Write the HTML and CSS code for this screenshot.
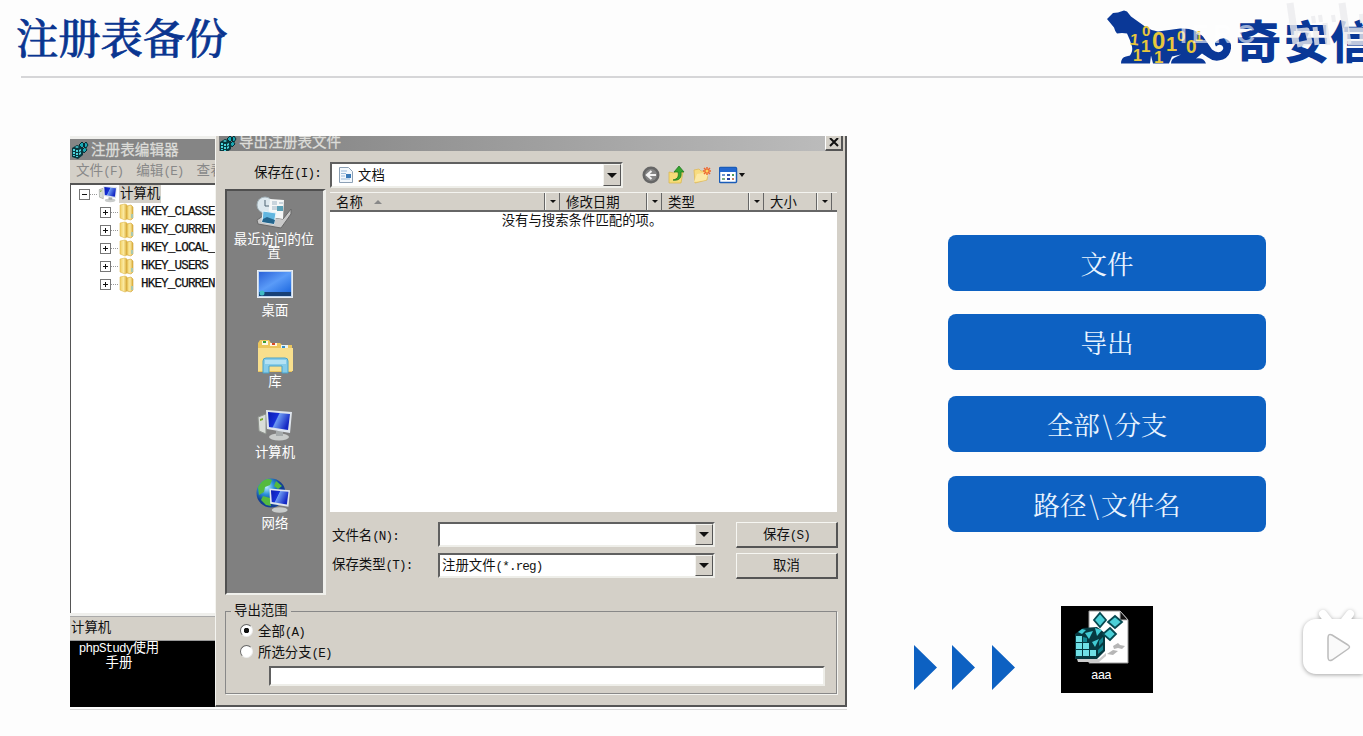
FILE: index.html
```html
<!DOCTYPE html>
<html lang="zh-CN">
<head>
<meta charset="utf-8">
<title>注册表备份</title>
<link rel="stylesheet" href="styles.css">
</head>
<body>
<svg class="defs" width="0" height="0">
  <defs>
    <linearGradient id="folder" x1="0" x2="1"><stop offset="0" stop-color="#f0cf62"/><stop offset=".5" stop-color="#fbe9a0"/><stop offset="1" stop-color="#d9ab35"/></linearGradient>
    <linearGradient id="screen" x1="0" x2="1" y2=".4"><stop offset="0" stop-color="#0a1bb0"/><stop offset=".45" stop-color="#1630d8"/><stop offset=".5" stop-color="#6c9af2"/><stop offset="1" stop-color="#1428c4"/></linearGradient>
    <linearGradient id="desk" x1="0" x2="1" y2="1"><stop offset="0" stop-color="#2b62d8"/><stop offset=".5" stop-color="#5a9bf8"/><stop offset="1" stop-color="#1f6ae0"/></linearGradient>
    <radialGradient id="globe" cx=".35" cy=".3"><stop offset="0" stop-color="#b8ecff"/><stop offset=".5" stop-color="#2b90d8"/><stop offset="1" stop-color="#123f94"/></radialGradient>
    <symbol id="cubes" viewBox="0 0 18 18">
      <path d="M1 7l5-3 6 2v8l-5 4-6-2z" fill="#08383f"/>
      <path d="M2 8h2v2H2zM5 9h2v2H5zM2 11h2v2H2zM5 12h2v2H5zM2 14h2v1H2zM5 15h2v1H5zM8 9l2-1v2l-2 1zM8 12l2-1v2l-2 1zM4 6l2-1 2 1-2 1z" fill="#4bd3dc"/>
      <path d="M8 4l3-3 3 3-3 3zM12 4l3-3 2 3-2 3zM11 9l3-3 2 3-3 3z" fill="#1ba9b5" stroke="#052f36"/>
    </symbol>
    <symbol id="folders" viewBox="0 0 16 18">
      <path d="M1 2l5-1 2 1v14l-2 1-5-2z" fill="url(#folder)" stroke="#dfb94d" stroke-width=".6"/>
      <path d="M8 3l4-1 2 2v11l-2 2-4-1z" fill="url(#folder)" stroke="#d0a339" stroke-width=".6"/>
      <path d="M12 11h2v4h-2z" fill="#a8c8b0"/>
    </symbol>
    <symbol id="pc" viewBox="0 0 36 34">
      <path d="M1 9l8-3v20l-7-3z" fill="#d9ddd8" stroke="#8d928c"/><path d="M3 11l3-1v2l-3 1z" fill="#7ba92f"/>
      <ellipse cx="22" cy="29" rx="10" ry="3.5" fill="#c9cccb"/><path d="M19 23h7v5h-7z" fill="#a5aaab"/>
      <path d="M9 2l26 2-2 21-23-4z" fill="#dfe5ec"/><path d="M11 4l22 2-2 16-19-3z" fill="url(#screen)"/>
    </symbol>
  </defs>
</svg>

<header class="head">
  <h1 class="title">注册表备份</h1>
  <svg class="logo" viewBox="1090 0 273 76">
    <path fill="#0a3897" d="M1107 19l6-6 5-.5 6-2 3 1 4 5q7 5 14 10 6 4 13 5l22-3q15-1 23 8 5 7 9 13 5 4 9 2 4-3 1-6-3-2-6 1-2-3 0-5 5-4 9-3 7 2 6 10-1 8-8 11-9 3-15-2l-6-4-6 5q8-1 10 5h-35q0-5 6-7l4-2-9 2-3 7h-16l-2-8-1 8h-29q0-6 5-7l4-1q3-4 2-9-2-7-5-13-5-1-10 0-2-2-3-6z"/>
    <g fill="#e8c73c" class="digits">
      <text x="1130" y="45" font-size="16" transform="rotate(6 1134 40)">1</text><text x="1133" y="61" font-size="16">1</text>
      <text x="1142" y="36" font-size="15">0</text><text x="1141" y="52" font-size="17">1</text>
      <text x="1152" y="49" font-size="24">0</text><text x="1154" y="63" font-size="17">1</text>
      <text x="1166" y="51" font-size="20">1</text><text x="1177" y="41" font-size="15">0</text>
      <text x="1186" y="53" font-size="19">0</text><text x="1195" y="41" font-size="14">1</text>
    </g>
    <g class="brand"><text x="1236" y="59">奇</text><text x="1284" y="59">安</text><text x="1330" y="59">信</text></g>
    <text class="wm" x="1180" y="43">IERC</text>
    <g fill="none" stroke="#ebebee" stroke-opacity=".8" stroke-linejoin="round">
      <path stroke-width="7" d="M1290 3l6 41M1342 3l6 41"/><path stroke-width="5" d="M1296 31l11-1 3 12-13 3M1315 27l2 18M1325 23l3 22M1348 30h14v13h-14"/><path stroke-width="4" d="M1313 16l1 7M1320 15l1 7M1333 15l1 7M1361 14l1 9"/>
    </g>
  </svg>
</header>
<hr class="rule">

<main class="content">
  <section class="shot">
    <div class="regedit">
      <div class="bar"><svg width="18" height="18"><use href="#cubes"/></svg><span>注册表编辑器</span></div>
      <div class="menu"><span>文件<i>(F)</i></span><span>编辑<i>(E)</i></span><span>查看</span></div>
      <div class="tree">
        <div class="node root"><b class="pm minus"></b><em></em><svg width="20" height="18" viewBox="0 0 36 34"><use href="#pc"/></svg><strong>计算机</strong></div>
        <div class="branch">
          <div class="node"><b class="pm"></b><em></em><svg width="16" height="18"><use href="#folders"/></svg><i>HKEY_CLASSE</i></div>
          <div class="node"><b class="pm"></b><em></em><svg width="16" height="18"><use href="#folders"/></svg><i>HKEY_CURREN</i></div>
          <div class="node"><b class="pm"></b><em></em><svg width="16" height="18"><use href="#folders"/></svg><i>HKEY_LOCAL_</i></div>
          <div class="node"><b class="pm"></b><em></em><svg width="16" height="18"><use href="#folders"/></svg><i>HKEY_USERS</i></div>
          <div class="node"><b class="pm"></b><em></em><svg width="16" height="18"><use href="#folders"/></svg><i>HKEY_CURREN</i></div>
        </div>
      </div>
      <div class="status">计算机</div>
      <div class="desktop"><i>phpStudy</i>使用<br>手册</div>
    </div>

    <div class="dialog">
      <div class="dbar"><svg width="18" height="18"><use href="#cubes"/></svg><span>导出注册表文件</span><button class="close"><svg width="10" height="9"><path d="M1 0l8 8M9 0L1 8" stroke="#111" stroke-width="2"/></svg></button></div>
      <div class="look">
        <label>保存在<i>(I):</i></label>
        <div class="combo"><svg width="16" height="18"><path d="M1.500 1.500h9l4 4v11h-13z" fill="#f3f8fd" stroke="#8ca0b5"/><path d="M3 5h6M3 7.500h5M3 10h4M3 13h9" stroke="#9bbbd9"/><path d="M8 8h5v4H8z" fill="#3a7ab8"/></svg><span>文档</span><b class="drop"></b></div>
        <div class="tools">
          <svg width="18" height="18"><circle cx="9" cy="9" r="8.500" fill="#666"/><circle cx="9" cy="9" r="6" fill="#858585"/><path d="M14 9H6M9.500 5L5 9l4.500 4" fill="none" stroke="#f3f3f3" stroke-width="2.200"/></svg>
          <svg width="17" height="18"><path d="M1 6l5 1 2-2 7 1-2 11H1z" fill="#f6dc78" stroke="#d8b44a" stroke-width=".7"/><path d="M5 14c5-1 6-4 5-8H6l5-6 5 6h-3c1 6-2 9-8 8z" fill="#36a52f" stroke="#187319" stroke-width=".7"/></svg>
          <svg width="18" height="18"><path d="M1 4l5-1 2 2h7l-1 9-12 3z" fill="#f8dc80" stroke="#deb95a" stroke-width=".8"/><path d="M1 16L4 8l12-2-3 8z" fill="#fce9a5"/><path d="M14 1v8M10 5h8M11 2l6 6M17 2l-6 6" stroke="#ed6630" stroke-width="1.500"/><circle cx="14" cy="5" r="1.500" fill="#ffd35c"/></svg>
          <svg width="26" height="18"><rect x=".5" y="1.500" width="17" height="15" rx="1" fill="#fff" stroke="#1a5cb8" stroke-width="1.500"/><path d="M1 2h16v4H1z" fill="#2468cf"/><path d="M3 8h3v2H3z" fill="#6b94cf"/><path d="M8 8h3v2H8z" fill="#325caf"/><path d="M13 8h2v2h-2z" fill="#4d9858"/><path d="M3 12h3v2H3z" fill="#77aa82"/><path d="M8 12h3v2H8z" fill="#2a3f9f"/><path d="M13 12h2v2h-2z" fill="#c77e62"/><path d="M20 7h6l-3 4z" fill="#111"/></svg>
        </div>
      </div>
      <div class="mid">
        <nav class="places">
          <div class="place first"><svg width="38" height="34" viewBox="0 0 38 34"><path d="M2 24l6-4 20 3 8-10v5L26 32 3 28z" fill="#c9c9c9" stroke="#686868"/><circle cx="10" cy="9" r="8" fill="#dce8ee" stroke="#a2b1b8"/><path d="M10 4v6h4" fill="none" stroke="#4e6472"/><path d="M15 3l14 1-1 19-15-2z" fill="#f5f7f7"/><path d="M17 6h5M17 8h5M24 7h4M17 11h5M17 13h8" stroke="#9bb1c2"/><path d="M22 10h6v5h-6z" fill="#5aa0b6"/><path d="M8 15l13 2-2 11-12-2z" fill="#62b6df" stroke="#e9f5fa"/><path d="M8 23l4-2 8 3-1 4-12-2z" fill="#24658d"/></svg><span>最近访问的位<br>置</span></div>
          <div class="place desk"><svg width="36" height="28"><rect x=".5" y=".5" width="35" height="27" fill="#bdd4ef" stroke="#e9edf2"/><path d="M2 2h32v20H2z" fill="url(#desk)"/><path d="M2 22h32v4H2z" fill="#174076"/><circle cx="5" cy="23" r="2.500" fill="#40bbc6"/></svg><span>桌面</span></div>
          <div class="place lib"><svg width="37" height="36"><path d="M1 4l2-3h9l2 3h9l2 2h10v27H1z" fill="#ecc65c"/><path d="M5 2h6v4H5z" fill="#f8f8e8"/><path d="M6 2h3v2H6z" fill="#3a9d35"/><path d="M13 4h7v3h-7z" fill="#fff4e0"/><path d="M15 4h3v2h-3z" fill="#d94926"/><path d="M24 6h7v4h-7z" fill="#e7f3f6"/><path d="M25 7h3v2h-3z" fill="#338fc9"/><path d="M1 9h35v23H1z" fill="#f8df8d"/><path d="M6 34V22q0-3 3-3h19q3 0 3 3v12h-6v-7H12v7z" fill="#86cce9" stroke="#4ba2c8"/><path d="M8 21h21v4H8z" fill="#b4e2f4"/></svg><span>库</span></div>
          <div class="place comp"><svg width="38" height="34" viewBox="0 0 36 34"><use href="#pc"/></svg><span>计算机</span></div>
          <div class="place net"><svg width="38" height="36"><circle cx="15" cy="15" r="14.500" fill="url(#globe)"/><path d="M2 9c5-8 10-9 14-7l-2 5-5 2-1 5-5 3zM7 18l7 2 1 8-5-1-5-5zM20 3l6 5-4 3-4-3z" fill="#55ba3e"/><svg x="11" y="9" width="27" height="27" viewBox="8 0 30 34"><ellipse cx="22" cy="29" rx="10" ry="3.500" fill="#c9cccb"/><path d="M9 2l26 2-2 21-23-4z" fill="#dfe5ec"/><path d="M11 4l22 2-2 16-19-3z" fill="url(#screen)"/></svg></svg><span>网络</span></div>
        </nav>
        <div class="right">
          <div class="list">
            <div class="cols"><span class="c1">名称<u></u></span><b></b><span class="c2">修改日期</span><b></b><span class="c3">类型</span><b></b><span class="c4">大小</span><b></b><span class="c5"></span></div>
            <p>没有与搜索条件匹配的项。</p>
          </div>
          <div class="form">
            <label>文件名<i>(N):</i></label><div class="combo"><b class="drop"></b></div><button class="btn">保存<i>(S)</i></button>
            <label class="kind">保存类型<i>(T):</i></label><div class="combo"><span>注册文件<i>(*.reg)</i></span><b class="drop"></b></div><button class="btn">取消</button>
          </div>
        </div>
      </div>
      <fieldset class="range">
        <legend>导出范围</legend>
        <div class="radio"><b class="on"></b><span>全部<i>(A)</i></span></div>
        <div class="radio"><b></b><span>所选分支<i>(E)</i></span></div>
        <div class="field"></div>
      </fieldset>
    </div>
  </section>

  <aside class="side">
    <div class="step">文件</div>
    <div class="step">导出</div>
    <div class="step s3">全部<span>\</span>分支</div>
    <div class="step s4">路径<span>\</span>文件名</div>
    <div class="result">
      <svg class="arrows" width="102" height="46"><path d="M0 0l23 22.500L0 45zM38 0l23 22.500L38 45zM78 0l23 22.500L78 45z" fill="#0d61c2"/></svg>
      <div class="regfile">
        <svg width="56" height="56">
          <path d="M16 1h31l8 9v43H16z" fill="#fff" stroke="#999"/><path d="M47 1v9h8z" fill="#111" stroke="#bbb"/>
          <path d="M34 44l6-4 5 1-5 4zM40 36l5-3 2 2 5 1-3 3-4-1-4 1z" fill="#b6b6b6"/><path d="M4 49h22l7-6v3l-7 6H5z" fill="#ccc"/>
          <path d="M2 24l8-6 14-1 8 6v18l-8 8H2z" fill="#063940"/>
          <g fill="#6fe0e6"><path d="M3 26h6v6H3zM3 33h6v6H3zM3 40h6v6H3zM10 33h6v6h-6zM10 40h6v6h-6zM17 40h6v6h-6z"/><path d="M5 22l4-3 4 1-4 4zM12 23l8-2-4 8zM22 18l7 2-5 6zM19 32l7-3-4 8z" fill="#42cbd4"/><path d="M26 31l4-4v5l-4 4zM25 40l5-5v5l-5 4zM10 27l4 1v4h-4z" fill="#138792"/></g>
          <g fill="#4bd0d8" stroke="#074951" stroke-width="1.800"><path d="M27 3l6 7-6 7-6-7zM42 6l7 6-7 6-7-6zM37 18l6 6-6 6-7-6z"/></g>
        </svg><i>aaa</i>
      </div>
    </div>
  </aside>
</main>
<svg class="tv" width="66" height="76" viewBox="0 0 66 76"><g fill="#fff"><path d="M26 10l7 9M53 10l-7 9" stroke="#fff" stroke-width="8" stroke-linecap="round"/><rect x="6" y="15" width="70" height="55" rx="13"/></g><path d="M31 34q0-5 4-3l16 10q3 2 0 4L35 56q-4 2-4-3z" fill="#fafafa" stroke="#bcbcbc" stroke-width="1.500"/></svg>
</body>
</html>
```
FILE: styles.css
```css
* { box-sizing: border-box; }
body { margin: 0; width: 1363px; height: 736px; overflow: hidden; position: relative; background: #fdfdfd; color: #111; font: 13.4px/18px "Liberation Sans", "Noto Sans CJK SC", sans-serif; }
svg { display: block; flex: none; }
.defs { position: absolute; }
i { font: normal 12.6px/1 "Liberation Mono", monospace; letter-spacing: -.86px; }
button { font: inherit; padding: 0; color: inherit; }

.head { display: flex; justify-content: space-between; height: 76px; padding-left: 16px; }
.title { margin: 0; padding-top: 6px; font: 500 42.300px/60px "Noto Serif CJK SC", "Noto Sans CJK SC", serif; color: #0a3590; -webkit-text-stroke: .7px #0a3590; }
.logo { width: 273px; height: 76px; }
.digits { font-family: "Liberation Sans", sans-serif; font-weight: bold; }
.brand { font: 900 45px "Noto Sans CJK SC", sans-serif; fill: #0a3897; }
.wm { font: bold 25px "Liberation Sans", sans-serif; fill: #fff; fill-opacity: .6; letter-spacing: 5px; }
.rule { margin: 0 0 0 21px; border: 0; height: 2px; background: #d6d6d8; }

.content { display: flex; padding: 58px 0 0 70px; }
.shot { display: flex; width: 777px; height: 574px; border-bottom: 1px solid #d8d8d8; padding-bottom: 2px; }
.regedit { width: 145px; padding-top: 3px; overflow: hidden; display: flex; flex-direction: column; background: #efefec; }
.regedit > div { white-space: nowrap; flex: none; overflow: hidden; }
.bar { height: 21px; background: #858585; color: #dcdcd8; display: flex; align-items: center; gap: 2px; font-size: 14.600px; padding: 1px; -webkit-text-stroke: .3px; }
.menu { height: 23px; background: #d4d0c8; color: #888; display: flex; gap: 13px; padding: 2px 0 0 6px; font-size: 13.600px; }
.tree { height: 430px; background: #fff; border: solid #555; border-width: 2px 0 0 1px; padding: 0 0 0 8px; }
.node { display: flex; align-items: center; height: 18px; }
.node strong { font-weight: 400; background: #d4d0c8; padding: 0 1px; margin-left: 1px; }
.node em { flex: none; width: 7px; border-top: 1px dotted #999; }
.node i { margin-left: 6px; -webkit-text-stroke: .25px #111; }
.node svg { margin-left: 1px; }
.branch { padding-left: 21px; }
.pm { flex: none; width: 11px; height: 11px; border: 1px solid #777; background: linear-gradient(#111, #111) center / 5px 1px no-repeat, linear-gradient(#111, #111) center / 1px 5px no-repeat, #fff; }
.pm.minus { background: linear-gradient(#111, #111) center / 5px 1px no-repeat, #fff; }
.status { height: 24px; margin-top: 3px; background: #d4d0c8; padding: 2px 0 0 1px; border-top: 1px solid #aaa; }
.regedit .desktop { flex: 1; background: #000; color: #fff; text-align: center; line-height: 13px; padding: 0 47px 0 0; border-top: 1px solid #999; }

.dialog { width: 632px; background: #d4d0c8; border: solid #555; border-width: 0 2px 2px 0; border-left: 1px solid #f4f4f0; padding: 0 2px 0 3px; display: flex; flex-direction: column; }
.dbar { height: 15px; display: flex; align-items: center; gap: 2px; color: #dcdcd8; overflow: hidden; background: linear-gradient(90deg, #808080, #bdbdbd); font-size: 14.600px; line-height: 15px; -webkit-text-stroke: .3px; }
.dbar span { margin-top: -3px; flex: 1; }
.close { width: 18px; height: 15px; border: solid #555; border-width: 0 2px 2px 0; border-left: 1px solid #fff; background: #d4d0c8; display: flex; justify-content: center; align-items: center; }
.look { display: flex; height: 38px; padding: 11px 0 0 35px; }
.look label { width: 76px; padding-top: 2px; }
.combo { display: flex; align-items: center; background: #fff; border: 2px solid; border-color: #606060 #eeeee9 #eeeee9 #606060; padding-left: 2px; }
.look .combo { width: 293px; height: 26px; padding-left: 6px; gap: 4px; }
.look .combo span { padding-top: 1px; }
.drop { width: 18px; height: 100%; margin-left: auto; border: 1px solid; border-color: #f4f4f0 #555 #555 #f4f4f0; background: #d4d0c8; display: flex; justify-content: center; align-items: center; }
.drop::before, .cols b::before { content: ""; border: solid transparent; border-width: 5px 5px 0; border-top-color: #111; }
.tools { display: flex; gap: 8px; padding: 4px 0 0 19px; }
.mid { display: flex; gap: 4px; padding-left: 6px; height: 408px; }
.places { width: 101px; height: 406px; flex: none; background: #808080; border: 2px solid; border-color: #505050 #f0f0ec #f0f0ec #505050; border-right-width: 3px; color: #fff; display: flex; flex-direction: column; padding-top: 3px; }
.place { height: 71px; display: flex; flex-direction: column; align-items: center; text-align: center; flex: none; }
.place span { line-height: 13px; margin-top: 4px; }
.place.first { height: 72px; padding: 2px 2px 0 0; }
.place.first span { margin-top: 3px; white-space: nowrap; }
.place.desk { height: 70px; padding-top: 4px; }
.place.desk span { margin-top: 6px; }
.place.lib { padding-top: 3px; }
.place.lib span { margin-top: 0; }
.place.comp { padding-top: 1px; }
.place.net span { margin-top: 3px; }
.right { width: 510px; padding-top: 3px; }
.list { width: 507px; height: 320px; background: #fff; }
.list p { margin: 0; padding-right: 3px; text-align: center; line-height: 18px; }
.cols { height: 20px; display: flex; background: #d4d0c8; border-top: 1px solid #f4f4f0; border-bottom: 2px solid #666; overflow: hidden; }
.cols span { padding: 1px 0 0 6px; border-right: 1px solid #666; white-space: nowrap; }
.cols b { width: 15px; border-left: 1px solid #f4f4f0; border-right: 1px solid #666; display: flex; align-items: center; justify-content: center; flex: none; }
.cols b::before { border-width: 3px 3px 0; }
.cols u { display: inline-block; margin: 0 0 3px 11px; border: solid transparent; border-width: 0 4px 4px; border-bottom-color: #888; }
.c1 { width: 215px; } .c2 { width: 87px; } .c3 { width: 87px; } .c4 { width: 53px; } .cols .c5 { flex: 1; border: 0; padding: 0; }
.form { display: grid; grid-template-columns: 108px 277px 102px; column-gap: 0; row-gap: 5px; padding-top: 10px; width: 510px; }
.form .combo { height: 25px; }
.form label { padding: 5px 0 0 2px; white-space: nowrap; }
.form .kind { padding-top: 3px; }
.form .btn { margin-left: 21px; width: 102px; height: 26px; border: 1px solid; border-color: #f6f6f2 #555 #555 #f6f6f2; border-right-width: 2px; border-bottom-width: 2px; background: #d4d0c8; }
.range { margin: 6px 7px 0 6px; width: 612px; height: 91px; border: 1px solid #888; box-shadow: 1px 1px 0 #f4f4f0; padding: 0 0 0 14px; }
.range legend { padding: 0 3px; margin-left: -9px; line-height: 16px; }
.radio { display: flex; align-items: center; height: 21px; padding-top: 1px; }
.radio span { padding-top: 4px; }
.radio b { width: 13px; height: 13px; border-radius: 50%; background: #fff; border: 1px solid; border-color: #666 #eee #eee #666; margin-right: 5px; }
.radio b.on { background: radial-gradient(circle, #111 0 2.500px, #fff 3px); }
.field { margin: 5px 0 0 29px; width: 556px; height: 20px; background: #fff; border: 2px solid; border-color: #606060 #eeeee9 #eeeee9 #606060; }

.side { width: 318px; margin-left: 101px; padding-top: 99px; }
.step { height: 56px; margin-bottom: 23px; border-radius: 8px; background: #0d61c2; color: #e9f4ff; text-align: center; font: 400 26.600px/56px "Noto Serif CJK SC", "Noto Sans CJK SC", serif; }
.step span { padding: 0 2px 0 3px; }
.s3 { margin-top: 26px; margin-bottom: 24px; }
.s4 { margin-bottom: 0; }
.result { display: flex; margin: 74px 0 0 -34px; }
.arrows { margin-top: 39px; }
.regfile { width: 92px; height: 87px; margin-left: 45px; background: #000; color: #fff; padding: 4px 0 0 12px; }
.regfile i { display: block; width: 56px; padding-top: 4px; text-align: center; }
.tv { position: absolute; left: 1297px; top: 604px; filter: drop-shadow(0 1px 2px rgba(0, 0, 0, .35)); }
```
